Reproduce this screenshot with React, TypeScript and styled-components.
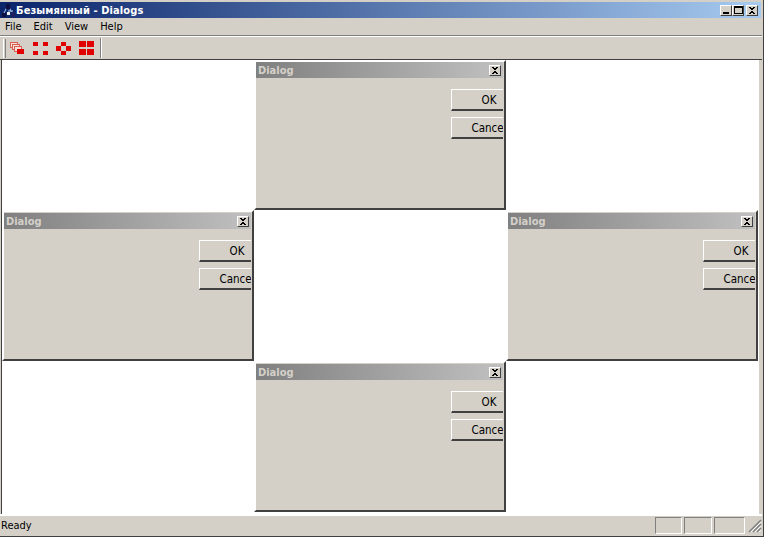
import React, { FC } from 'react';
import styled, { createGlobalStyle } from 'styled-components';

const face = '#d4d0c8';
const uiFont = '"DejaVu Sans Condensed", "DejaVu Sans", sans-serif';

const GlobalStyle = createGlobalStyle`
  * {
    box-sizing: border-box;
  }
  html, body {
    margin: 0;
    padding: 0;
    background: #ffffff;
  }
`;

const Frame = styled.div`
  width: 764px;
  height: 537px;
  display: flex;
  flex-direction: column;
  padding: 2px 1px 1px 0;
  background: ${face};
  border-right: 1px solid #404040;
  border-bottom: 1px solid #404040;
  font-family: ${uiFont};
  font-size: 11px;
  color: #000;
  overflow: hidden;
`;

const TitleBar = styled.div`
  height: 16px;
  flex: none;
  display: flex;
  align-items: center;
  padding: 0 3px 0 1px;
  margin-right: 1px;
  background: linear-gradient(to right, #0a246a, #a6caf0);
`;

const TitleText = styled.span`
  font-family: ${uiFont};
  font-weight: bold;
  font-size: 11px;
  letter-spacing: 0.1px;
  color: #fff;
  flex: 1;
  white-space: nowrap;
`;

const CaptionButtons = styled.div`
  display: flex;
  align-items: center;
`;

const CaptionButton = styled.div<{ $gap?: number }>`
  width: 12px;
  height: 11px;
  margin-left: ${({ $gap }) => $gap ?? 0}px;
  background: ${face};
  border-top: 1px solid #fff;
  border-left: 1px solid #fff;
  border-right: 1px solid #404040;
  border-bottom: 1px solid #404040;
  display: flex;
  align-items: center;
  justify-content: center;
`;

const MenuBar = styled.div`
  height: 18px;
  flex: none;
  display: flex;
  align-items: center;
  padding-left: 5px;
  gap: 12px;
  font-size: 11px;
  border-bottom: 1px solid #808080;
`;

const ToolBar = styled.div`
  height: 24px;
  flex: none;
  display: flex;
  align-items: center;
  border-top: 1px solid #fff;
  border-bottom: 1px solid #404040;
  padding-left: 3px;
`;

const Gripper = styled.div`
  width: 3px;
  height: 19px;
  border-left: 1px solid #fff;
  border-right: 1px solid #808080;
  background: ${face};
`;

const ToolButton = styled.div`
  width: 23px;
  height: 20px;
  display: flex;
  align-items: center;
  justify-content: center;
`;

const ToolSeparator = styled.div`
  width: 2px;
  height: 20px;
  margin-left: 2px;
  border-left: 1px solid #808080;
  border-right: 1px solid #fff;
`;

const ClientArea = styled.div`
  flex: 1;
  display: grid;
  grid-template-columns: 252px 252px 252px;
  grid-template-rows: 150px 151px 151px;
  margin: 0 3px 0 1px;
  background: #fff;
  align-content: start;
  border-left: 1px solid #404040;
`;

const Cell = styled.div`
  background: #fff;
`;

const DialogBox = styled.div<{ $top?: boolean }>`
  background: ${face};
  border-top: 2px solid #fff;
  border-left: 2px solid #fff;
  border-right: 2px solid #404040;
  border-bottom: 2px solid #404040;
  padding: ${({ $top }) => ($top ? 0 : 1)}px 1px 0 0;
  display: flex;
  flex-direction: column;
`;

const DialogTitle = styled.div`
  height: 16px;
  flex: none;
  display: flex;
  align-items: center;
  padding: 0 2px;
  background: linear-gradient(to right, #808080, #c0c0c0);
`;

const DialogTitleText = styled.span`
  flex: 1;
  font-weight: bold;
  font-size: 11px;
  color: ${face};
`;

const DialogBody = styled.div`
  display: flex;
  flex-direction: column;
  gap: 6px;
  padding: 11px 0 0 195px;
  overflow: hidden;
  flex: 1;
`;

const PushButton = styled.div`
  width: 75px;
  height: 22px;
  flex: none;
  display: flex;
  align-items: center;
  justify-content: center;
  font-size: 11.5px;
  background: ${face};
  border-top: 1px solid #fff;
  border-left: 1px solid #fff;
  border-bottom: 2px solid #404040;
`;

const StatusBar = styled.div`
  height: 21px;
  flex: none;
  display: flex;
  align-items: center;
  border-top: 1px solid #fff;
  box-shadow: inset 0 1px 0 #fff;
  padding-left: 1px;
`;

const StatusText = styled.span`
  flex: 1;
  font-size: 11px;
`;

const Pane = styled.div<{ $width: number }>`
  width: ${({ $width }) => $width}px;
  height: 17px;
  margin-right: 2px;
  border-top: 1px solid #808080;
  border-left: 1px solid #808080;
  border-right: 1px solid #fff;
  border-bottom: 1px solid #fff;
`;

const CloseGlyph: FC = () => (
  <svg width="8" height="7" viewBox="0 0 8 7">
    <path d="M1 0h2v1h2V0h2v1H6v1H5v1H3V2H2V1H1zM3 4h2v1h1v1h1v1H5V6H3v1H1V6h1V5h1z" fill="#000" />
  </svg>
);

const MinGlyph: FC = () => (
  <svg width="8" height="7" viewBox="0 0 8 7">
    <rect x="1" y="5" width="6" height="2" fill="#000" />
  </svg>
);

const MaxGlyph: FC = () => (
  <svg width="9" height="8" viewBox="0 0 9 8">
    <path d="M0 0h9v8H0zM1 2v5h7V2z" fill="#000" fillRule="evenodd" />
  </svg>
);

const AppIcon: FC = () => (
  <svg width="15" height="15" viewBox="0 0 15 15">
    <path d="M7 2L3 10M7 2l4 8M7 8h5" stroke="#a8c8f0" strokeWidth="1" fill="none" />
    <rect x="5" y="1" width="4" height="5" fill="#101040" />
    <rect x="1" y="10" width="4" height="4" fill="#101040" />
    <rect x="10" y="9" width="4" height="5" fill="#202060" />
    <rect x="6" y="9" width="3" height="3" fill="#f0f0f0" />
  </svg>
);

const CascadeIcon: FC = () => (
  <svg width="15" height="13" viewBox="0 0 15 13">
    <rect x="0.5" y="0.5" width="7" height="5" fill="#f8e0d8" stroke="#d86050" />
    <rect x="2.5" y="2.5" width="7" height="5" fill="#f8e0d8" stroke="#d86050" />
    <rect x="4.5" y="4.5" width="7" height="5" fill="#f8e0d8" stroke="#d86050" />
    <rect x="7" y="7" width="7" height="5" fill="#e00000" />
  </svg>
);

const squares: Record<string, [number, number, number, number][]> = {
  corners: [
    [1, 1, 5, 4],
    [11, 1, 5, 4],
    [1, 10, 5, 4],
    [11, 10, 5, 4],
  ],
  cross: [
    [6, 1, 5, 4],
    [1, 5, 5, 5],
    [11, 5, 5, 5],
    [6, 10, 5, 4],
  ],
  tile: [
    [1, 0, 7, 6],
    [9, 0, 7, 6],
    [1, 8, 7, 6],
    [9, 8, 7, 6],
  ],
};

const SquaresIcon: FC<{ kind: string }> = ({ kind }) => (
  <svg width="17" height="15" viewBox="0 0 17 15">
    {squares[kind].map(([x, y, w, h]) => (
      <rect key={`${x}-${y}`} x={x} y={y} width={w} height={h} fill="#e00000" />
    ))}
  </svg>
);

const Dialog: FC<{ top?: boolean }> = ({ top }) => (
  <DialogBox $top={top}>
    <DialogTitle>
      <DialogTitleText>Dialog</DialogTitleText>
      <CaptionButton>
        <CloseGlyph />
      </CaptionButton>
    </DialogTitle>
    <DialogBody>
      <PushButton>OK</PushButton>
      <PushButton>Cancel</PushButton>
    </DialogBody>
  </DialogBox>
);

const App: FC = () => (
  <Frame>
    <GlobalStyle />
    <TitleBar>
      <AppIcon />
      <TitleText>Безымянный - Dialogs</TitleText>
      <CaptionButtons>
        <CaptionButton>
          <MinGlyph />
        </CaptionButton>
        <CaptionButton>
          <MaxGlyph />
        </CaptionButton>
        <CaptionButton $gap={2}>
          <CloseGlyph />
        </CaptionButton>
      </CaptionButtons>
    </TitleBar>
    <MenuBar>
      <span>File</span>
      <span>Edit</span>
      <span>View</span>
      <span>Help</span>
    </MenuBar>
    <ToolBar>
      <Gripper />
      <ToolButton>
        <CascadeIcon />
      </ToolButton>
      <ToolButton>
        <SquaresIcon kind="corners" />
      </ToolButton>
      <ToolButton>
        <SquaresIcon kind="cross" />
      </ToolButton>
      <ToolButton>
        <SquaresIcon kind="tile" />
      </ToolButton>
      <ToolSeparator />
    </ToolBar>
    <ClientArea>
      <Cell />
      <Dialog top />
      <Cell />
      <Dialog />
      <Cell />
      <Dialog />
      <Cell />
      <Dialog />
      <Cell />
    </ClientArea>
    <StatusBar>
      <StatusText>Ready</StatusText>
      <Pane $width={27} />
      <Pane $width={28} />
      <Pane $width={31} />
      <svg width="15" height="15" viewBox="0 0 15 15">
        <path d="M14 2L2 14M14 6L6 14M14 10L10 14" stroke="#808080" strokeWidth="1.5" />
        <path d="M14 4L4 14M14 8L8 14M14 12L12 14" stroke="#fff" strokeWidth="1" />
      </svg>
    </StatusBar>
  </Frame>
);

export default App;
